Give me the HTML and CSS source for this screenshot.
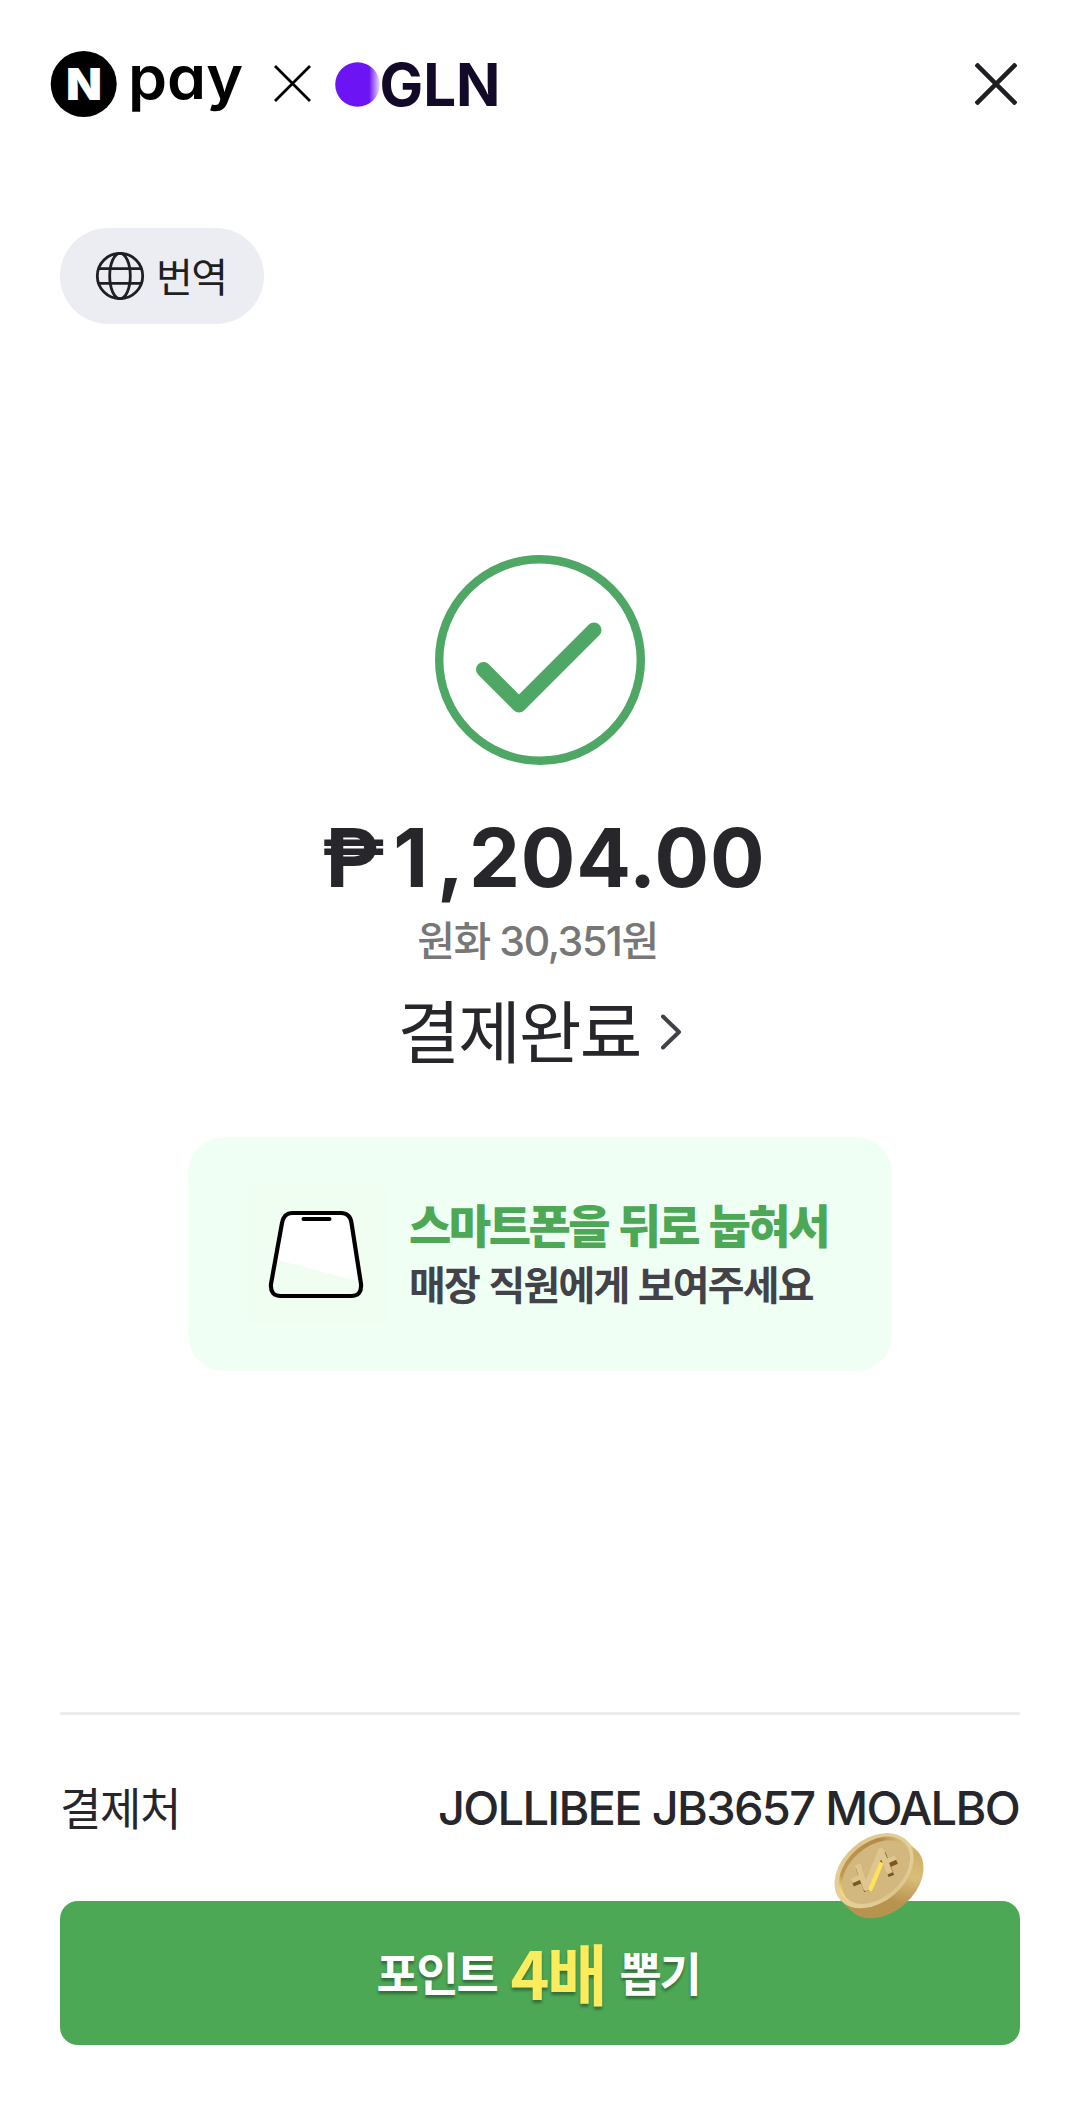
FILE: index.html
```html
<!DOCTYPE html>
<html lang="ko">
<head>
<meta charset="utf-8">
<title>결제완료</title>
<link rel="stylesheet" href="styles.css">
</head>
<body>
<main class="page">
  <header class="header">
    <svg class="brand" width="460" height="120" viewBox="44 24 460 120" role="img" aria-label="N pay x GLN">
      <defs>
        <linearGradient id="dot" x1="0" x2="1"><stop offset=".76" stop-color="#6d14f5"/><stop offset="1" stop-color="#6d14f5" stop-opacity=".15"/></linearGradient>
      </defs>
      <circle cx="83.7" cy="84" r="33"/>
      <text class="brand-n" x="66" y="100" textLength="36" lengthAdjust="spacingAndGlyphs">N</text>
      <text class="brand-pay" x="128" y="99" textLength="115" lengthAdjust="spacingAndGlyphs">pay</text>
      <path d="M275 66l35 35M310 66l-35 35" stroke="#000" stroke-width="2.8"/>
      <circle cx="357.5" cy="84.5" r="22.3" fill="url(#dot)"/>
      <text class="brand-gln" x="379.500" y="106" textLength="121" lengthAdjust="spacingAndGlyphs">GLN</text>
    </svg>
    <svg class="close" width="42" height="42" viewBox="0 0 42 42"><path d="M1 1l40 40M41 1L1 41" stroke="#1e1e23" stroke-width="4.5"/></svg>
  </header>

  <button class="translate">
    <svg width="50" height="50" viewBox="0 0 50 50" fill="none" stroke="#1e1e23" stroke-width="2.8">
      <circle cx="25" cy="25" r="22.7"/><ellipse cx="25" cy="25" rx="10.3" ry="22.7"/><path d="M4 17.7h42M4 32.3h42"/>
    </svg>
    <span class="translate-label">번역</span>
  </button>

  <section class="result">
    <svg class="check" width="210" height="210" viewBox="0 0 210 210" fill="none" stroke="#4ea764">
      <circle cx="105" cy="105" r="100.8" stroke-width="8.4"/>
      <path d="M48.5 114.5L84 150L159 75" stroke-width="15" stroke-linecap="round" stroke-linejoin="round"/>
    </svg>
    <div class="amount"><span class="peso">₱</span>1<span class="comma">,</span>204.00</div>
    <div class="won">원화 30,351원</div>
    <div class="done"><span>결제완료</span>
      <svg width="24" height="40" viewBox="0 0 24 40" fill="none" stroke="#404046" stroke-width="4" stroke-linecap="round" stroke-linejoin="round"><path d="M4 4.500L20 20L4 35.500"/></svg>
    </div>
    <div class="notice">
      <svg class="phone" width="138" height="138" viewBox="0 0 138 138">
        <path fill="#fff" d="M42 28h52q6 0 8 8l8 60L29 75l6-39q2-8 7-8z"/>
        <path d="M44 28H93q9 0 10.500 10L113 99q1 12-10 12H33q-11 0-10-12L34 38q2-10 10-10z" fill="none" stroke="#000" stroke-width="4.2"/>
        <path d="M55.500 34h26" stroke="#000" stroke-width="4" stroke-linecap="round"/>
      </svg>
      <div class="notice-text">
        <strong>스마트폰을 뒤로 눕혀서</strong>
        <span>매장 직원에게 보여주세요</span>
      </div>
    </div>
  </section>

  <div class="merchant">
    <span class="merchant-label">결제처</span>
    <span class="merchant-name">JOLLIBEE JB3657 MOALBO</span>
  </div>

  <button class="cta">
    <span>포인트</span><em>4배</em><span>뽑기</span>
    <svg class="coin" width="160" height="130" viewBox="0 0 480 390">
      <defs>
        <linearGradient id="side" gradientUnits="userSpaceOnUse" x1="130" y1="290" x2="370" y2="130">
          <stop offset="0" stop-color="#b8934f"/><stop offset=".3" stop-color="#d9bd78"/><stop offset=".55" stop-color="#d0b06a"/><stop offset=".72" stop-color="#f1d98a"/><stop offset=".84" stop-color="#fff3a8"/><stop offset="1" stop-color="#e0c888"/>
        </linearGradient>
        <linearGradient id="rim" x1="0" x2="1"><stop offset="0" stop-color="#e6d09a"/><stop offset=".5" stop-color="#dcc48c"/><stop offset="1" stop-color="#e3cf9b"/></linearGradient>
        <linearGradient id="inner" x1="0" x2="1"><stop offset="0" stop-color="#ffe270"/><stop offset=".15" stop-color="#c09a52"/><stop offset=".8" stop-color="#b18a47"/><stop offset="1" stop-color="#d8bd80"/></linearGradient>
      </defs>
      <g fill="url(#side)">
        <path d="M324 95l30 30L150 299l-30-30z"/>
        <ellipse rx="134" ry="94" transform="translate(252 212) rotate(-40.600)"/>
      </g>
      <ellipse rx="134" ry="94" transform="translate(222 182) rotate(-40.600)" fill="url(#rim)"/>
      <ellipse rx="122" ry="81" transform="translate(223 180) rotate(-40.600)" fill="url(#inner)"/>
      <ellipse rx="117" ry="76" transform="translate(227 186) rotate(-40.600)" fill="#d2b77e"/>
      <g fill="none" stroke-width="18">
        <path d="M176 173L201 243M248 130L274 198M158 221L180 212M262 166L290 153" stroke="#7e571f"/>
        <path d="M240 150L238 168" stroke="#8b6428"/>
        <path d="M207 241L242 156" stroke="#ffe25a"/>
        <path d="M173 163L198 234L243 123L270 190" stroke="#dfc68f" stroke-linejoin="round"/>
        <path d="M212 236L243 162" stroke="#ffe25a" stroke-width="12"/>
        <path d="M155 213L186 199M256 156L287 142" stroke="#dfc68f" stroke-width="14"/>
      </g>
    </svg>
  </button>
</main>
</body>
</html>
```
FILE: styles.css
```css
* { box-sizing: border-box; }
body { margin: 0; background: #fff; }
.page {
  width: 1080px;
  height: 2105px;
  padding: 0 60px;
  display: flex;
  flex-direction: column;
  font-family: "Noto Sans CJK KR", sans-serif;
  color: #26262b;
  white-space: nowrap;
}
button { border: 0; padding: 0; font: inherit; color: inherit; }
svg { display: block; flex: none; }

.header {
  height: 168px;
  margin: 0 -16px;
  padding-right: 19px;
  display: flex;
  align-items: center;
  justify-content: space-between;
}
.brand text { font-family: Inter, sans-serif; }
.brand-n { font-size: 44px; font-weight: 900; fill: #fff; }
.brand-pay { font-size: 60px; font-weight: 600; font-feature-settings: "cv11"; }
.brand-gln { font-size: 59px; font-weight: 700; fill: #120a28; }

.translate {
  width: 204px;
  height: 96px;
  margin-top: 60px;
  padding-left: 35px;
  display: flex;
  align-items: center;
  gap: 11px;
  border-radius: 48px;
  background: #ecedf2;
  color: #1e1e23;
}
.translate-label { padding-bottom: 2px; font-size: 40px; line-height: 60px; letter-spacing: -1.6px; }

.result { display: flex; flex-direction: column; align-items: center; }
.check { margin-top: 231px; }
.amount {
  margin-top: 45px;
  padding-left: 8px;
  font: 700 81px/96px Inter, sans-serif;
  letter-spacing: .8px;
}
.peso { margin-right: 8px; font-family: Roboto, sans-serif; font-size: 83px; line-height: 1; }
.comma { margin: 0 4px 0 8px; }
.won {
  margin-top: 11px;
  padding-right: 5px;
  font: 500 41px/48px Inter, "Noto Sans CJK KR", sans-serif;
  letter-spacing: -1.4px;
  color: #777;
}
.done {
  margin-top: 28px;
  display: flex;
  align-items: center;
  gap: 18px;
  font-size: 68px;
  line-height: 72px;
  letter-spacing: -1.8px;
}
.done svg { margin-top: 6px; }
.notice {
  width: 704px;
  height: 234px;
  margin-top: 72px;
  padding-left: 60px;
  display: flex;
  align-items: center;
  gap: 23px;
  border-radius: 36px;
  background: #f0fff4;
}
.phone { background: #f0fef1; }
.notice-text { padding-bottom: 3px; display: flex; flex-direction: column; font-weight: 700; }
.notice-text strong { font-size: 46px; line-height: 62px; letter-spacing: -2.5px; color: #4da856; }
.notice-text span { font-size: 40px; line-height: 59px; letter-spacing: -1.8px; color: #424248; }

.merchant {
  height: 189px;
  margin-top: 341px;
  border-top: 3px solid #ececec;
  display: flex;
  align-items: center;
  justify-content: space-between;
}
.merchant-label { padding-bottom: 2px; font-size: 45px; line-height: 60px; letter-spacing: -1.4px; }
.merchant-name { margin-right: 1px; font: 500 47px/60px Inter, sans-serif; letter-spacing: -1.7px; }

.cta {
  position: relative;
  height: 144px;
  padding: 0 4px 5px 0;
  display: flex;
  align-items: center;
  justify-content: center;
  border-radius: 18px;
  background: #4da855;
  color: #fff;
  font-size: 46px;
  font-weight: 700;
  letter-spacing: -2.3px;
  text-shadow: 0 3px 3px rgba(0, 0, 0, .35);
}
.cta em {
  margin: 0 14px;
  font-style: normal;
  font-size: 66px;
  line-height: 90px;
  color: #fbec5d;
}
.coin { position: absolute; left: 740px; top: -91px; }
```
